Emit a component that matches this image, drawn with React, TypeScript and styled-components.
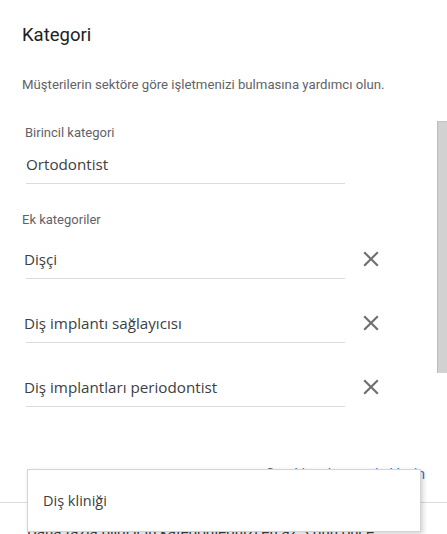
import React from "react";
import styled, { createGlobalStyle } from "styled-components";

const Global = createGlobalStyle`
  html, body { margin: 0; padding: 0; background: #fff; }
  body { width: 447px; height: 534px; overflow: hidden; font-family: Roboto, "Noto Sans", Arial, sans-serif; }
`;

const Page = styled.div`
  position: relative;
  width: 447px;
  height: 534px;
  overflow: hidden;
  background: #fff;
`;

const Content = styled.div`
  display: flex;
  flex-direction: column;
  padding: 24px 0 0 22px;
`;

const Title = styled.h1`
  margin: 0;
  font-size: 18.5px;
  font-weight: 400;
  line-height: 22px;
  color: #202124;
`;

const Subtitle = styled.p`
  margin: 30px 0 0;
  font-size: 13.2px;
  line-height: 18px;
  color: #5f6368;
`;

const FieldLabel = styled.div<{ $indent?: number }>`
  margin-left: ${(p) => p.$indent ?? 0}px;
  font-size: 13px;
  line-height: 16px;
  color: #5f6368;
`;

const Field = styled.div<{ $indent?: number; $height: number }>`
  box-sizing: border-box;
  width: 319px;
  margin-left: ${(p) => p.$indent ?? 0}px;
  display: flex;
  align-items: flex-end;
  height: ${(p) => p.$height}px;
  padding-bottom: 9px;
  border-bottom: 1px solid #dadce0;
  font-family: "Open Sans", Roboto, Arial, sans-serif;
  font-size: 15.2px;
  line-height: 20px;
  color: #3c4043;
`;

const Section = styled.div<{ $top: number }>`
  margin-top: ${(p) => p.$top}px;
  display: flex;
  flex-direction: column;
`;

const Row = styled.div<{ $top: number }>`
  margin-top: ${(p) => p.$top}px;
  display: flex;
  align-items: flex-end;
`;

const RowText = styled.span`
  margin-left: -2px;
`;

const RemoveButton = styled.button`
  border: 0;
  background: none;
  padding: 0;
  margin: 0 0 7px 13px;
  width: 26px;
  height: 26px;
  display: flex;
  align-items: center;
  justify-content: center;
  color: #707070;
  cursor: pointer;
`;

const HintLine = styled.div`
  margin: 57px 0 0;
  padding-right: 22px;
  text-align: right;
  font-size: 14px;
  line-height: 20px;
  color: #5f6368;
`;

const Blue = styled.span`
  color: #1a73e8;
`;

const Divider = styled.div`
  margin-top: 18px;
  height: 1px;
  background: #dadce0;
  width: 447px;
`;

const Footer = styled.p`
  margin: 19px 0 0 27px;
  font-size: 15px;
  line-height: 20px;
  color: #3c4043;
`;

const Scrollbar = styled.div`
  position: absolute;
  left: 437px;
  top: 121px;
  width: 10px;
  height: 252px;
  background: #d1d1d1;
  border-left: 1px solid #bcbcbc;
  border-top: 1px solid #c4c4c4;
  box-sizing: border-box;
`;

const Dropdown = styled.div`
  position: absolute;
  left: 27px;
  top: 469px;
  width: 394px;
  height: 63px;
  box-sizing: border-box;
  background: #fff;
  border: 1px solid #d4d4d4;
  box-shadow: 2px 2px 5px rgba(0, 0, 0, 0.18);
  display: flex;
  align-items: center;
  padding: 0 0 0 15px;
`;

const Option = styled.div`
  font-family: "Open Sans", Roboto, Arial, sans-serif;
  font-size: 14.5px;
  color: #3c4043;
  line-height: 20px;
`;

const CloseIcon = () => (
  <svg width="26" height="26" viewBox="0 0 24 24" fill="currentColor">
    <path d="M19 6.41L17.59 5 12 10.59 6.41 5 5 6.41 10.59 12 5 17.59 6.41 19 12 13.41 17.59 19 19 17.59 13.41 12z" />
  </svg>
);

const extras = ["Dişçi", "Diş implantı sağlayıcısı", "Diş implantları periodontist"];

export default function App() {
  return (
    <Page>
      <Global />
      <Content>
        <Title>Kategori</Title>
        <Subtitle>Müşterilerin sektöre göre işletmenizi bulmasına yardımcı olun.</Subtitle>
        <Section $top={31}>
          <FieldLabel $indent={3}>Birincil kategori</FieldLabel>
          <Field $indent={4} $height={43}>
            <span>Ortodontist</span>
          </Field>
        </Section>
        <Section $top={28}>
          <FieldLabel>Ek kategoriler</FieldLabel>
        </Section>
        {extras.map((e, i) => (
          <Row key={e} $top={i === 0 ? 15 : 28}>
            <Field $indent={4} $height={36}>
              <RowText>{e}</RowText>
            </Field>
            <RemoveButton aria-label="Kaldır">
              <CloseIcon />
            </RemoveButton>
          </Row>
        ))}
        <HintLine>
          Gerekirse <Blue>kategori ekleyin</Blue>
        </HintLine>
      </Content>
      <Divider />
      <Footer>Daha fazla bilgi için kategorilerinizi en az 3 gün önce güncelleyin</Footer>
      <Scrollbar />
      <Dropdown>
        <Option>Diş kliniği</Option>
      </Dropdown>
    </Page>
  );
}
